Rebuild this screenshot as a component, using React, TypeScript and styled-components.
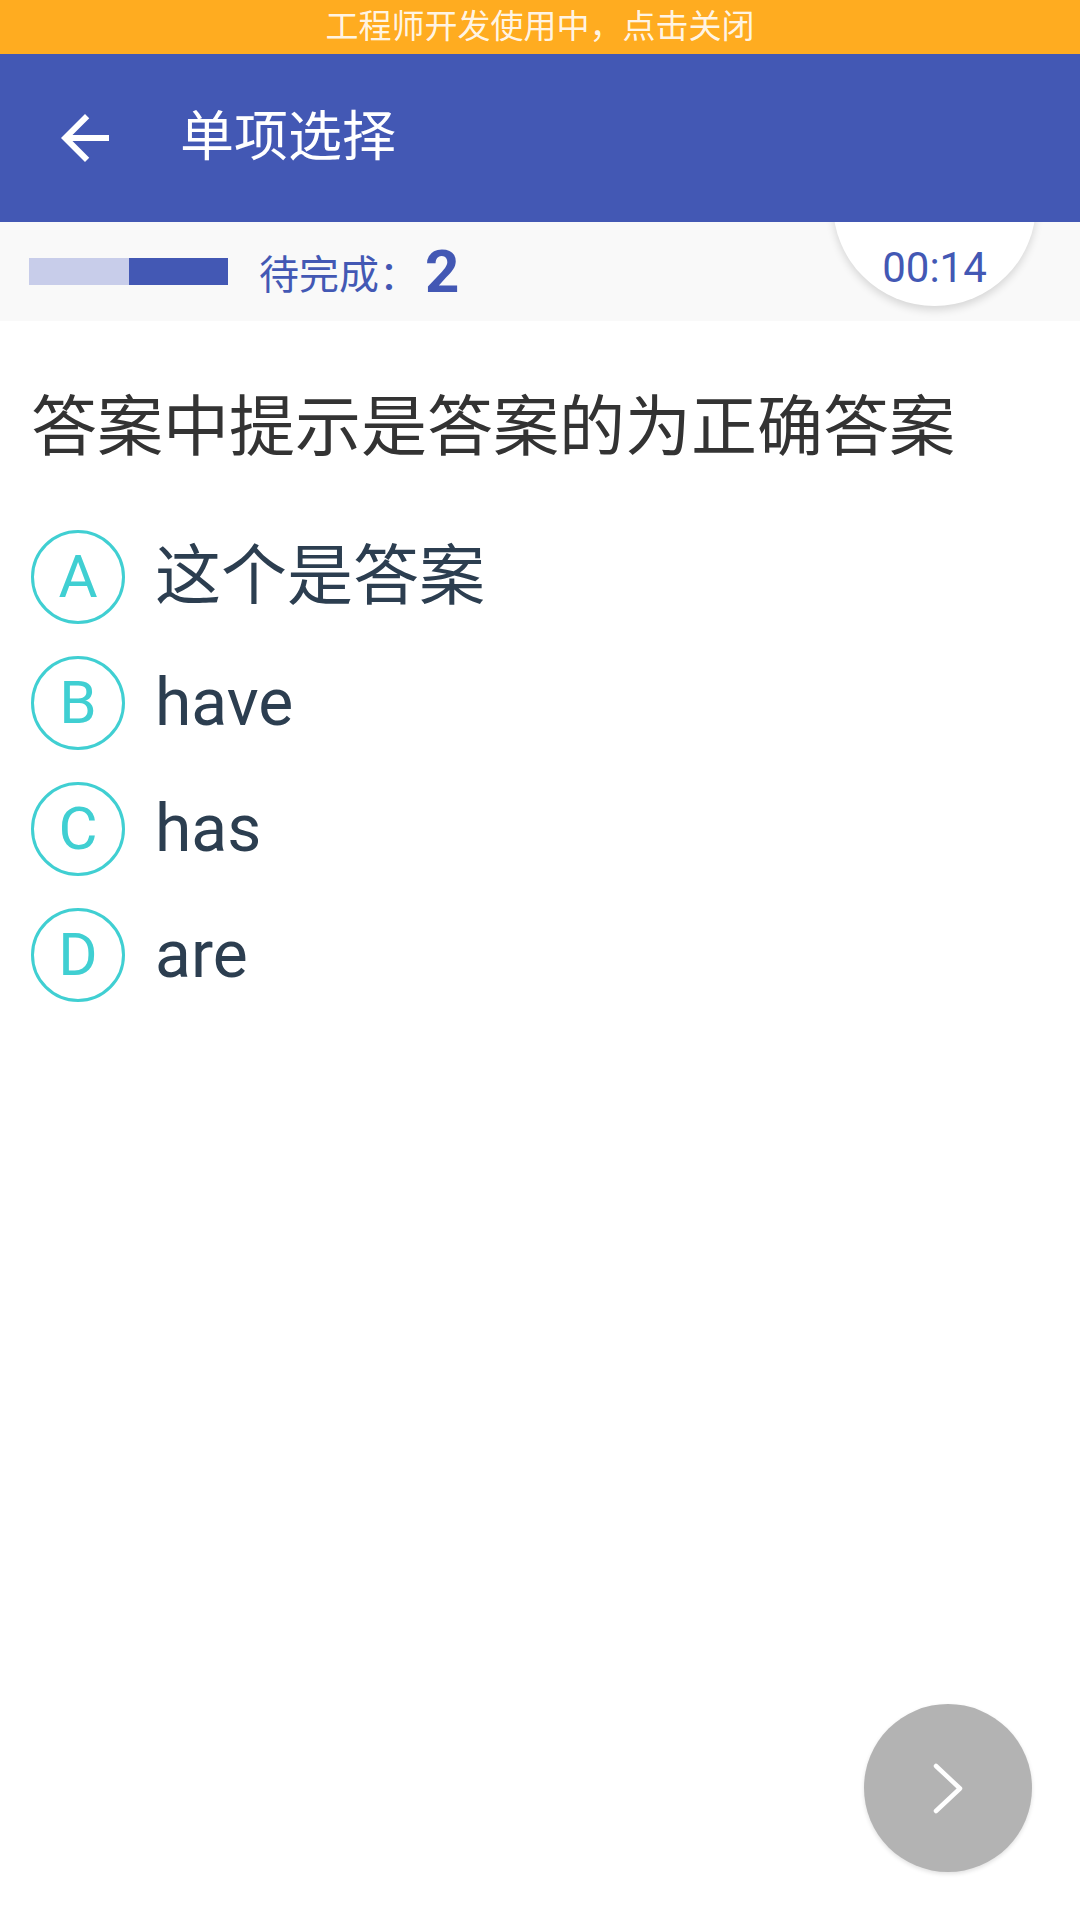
import React from "react";
import styled, { createGlobalStyle } from "styled-components";

const GlobalStyle = createGlobalStyle`
  html, body {
    margin: 0;
    padding: 0;
    background: #ffffff;
  }
  body {
    font-family: Roboto, "Noto Sans CJK SC", "Noto Sans", sans-serif;
    -webkit-font-smoothing: antialiased;
  }
  * { box-sizing: border-box; }
`;

const Page = styled.div`
  position: relative;
  width: 1080px;
  min-height: 1920px;
  background: #ffffff;
  overflow: hidden;
`;

const DevBanner = styled.div`
  height: 54px;
  background: #ffac20;
  color: rgba(255, 255, 255, 0.9);
  font-size: 33px;
  line-height: 54px;
  text-align: center;
`;

const Toolbar = styled.header`
  position: relative;
  z-index: 2;
  height: 168px;
  background: #4358b4;
  display: flex;
  align-items: center;
  padding-left: 49px;
`;

const BackButton = styled.button`
  width: 72px;
  height: 72px;
  padding: 0;
  border: none;
  background: transparent;
  display: flex;
  align-items: center;
  justify-content: center;
  svg { display: block; }
`;

const Title = styled.h1`
  margin: 0 0 0 59px;
  font-size: 54px;
  font-weight: 400;
  color: #ffffff;
  line-height: 1;
`;

const StatusBar = styled.div`
  position: relative;
  z-index: 1;
  height: 99px;
  background: #f9f9f9;
  display: flex;
  align-items: center;
  padding-left: 29px;
`;

const Progress = styled.div`
  width: 199px;
  height: 27px;
  background: #4358b4;
  display: flex;
`;

const ProgressDone = styled.div`
  height: 100%;
  background: #c8cdea;
`;

const PendingLabel = styled.span`
  margin-left: 31px;
  font-size: 40px;
  color: #4358b4;
  font-family: Roboto, "Noto Sans CJK SC", sans-serif;
`;

const PendingCount = styled.span`
  margin-left: 6px;
  font-size: 60px;
  font-weight: 700;
  color: #4358b4;
  line-height: 1;
`;

const TimerBubble = styled.div`
  position: absolute;
  right: 44px;
  top: -120px;
  width: 203px;
  height: 204px;
  border-radius: 50%;
  background: #ffffff;
  box-shadow: 0 4px 8px rgba(0, 0, 0, 0.14);
  display: flex;
  flex-direction: column;
  justify-content: flex-end;
  align-items: center;
  padding-bottom: 17px;
`;

const TimerText = styled.span`
  font-size: 42px;
  line-height: 42px;
  color: #4358b4;
`;

const Content = styled.main`
  padding: 61px 31px 0;
`;

const Question = styled.div`
  font-size: 66px;
  line-height: 92px;
  color: #333333;
`;

const OptionList = styled.ul`
  list-style: none;
  margin: 56px 0 0;
  padding: 0;
  display: flex;
  flex-direction: column;
  gap: 32px;
`;

const OptionRow = styled.li`
  display: flex;
  align-items: center;
  height: 94px;
`;

const OptionBadge = styled.span`
  width: 94px;
  height: 94px;
  flex: none;
  border-radius: 50%;
  border: 3px solid #40cfd2;
  color: #40cfd2;
  font-size: 60px;
  line-height: 1;
  display: flex;
  align-items: center;
  justify-content: center;
`;

const OptionText = styled.span`
  margin-left: 30px;
  font-size: 66px;
  color: #2c3e50;
  line-height: 1;
`;

const NextFab = styled.button`
  position: absolute;
  right: 48px;
  bottom: 48px;
  width: 168px;
  height: 168px;
  border-radius: 50%;
  border: none;
  background: #b3b3b3;
  box-shadow: 0 2px 4px rgba(0, 0, 0, 0.12);
  display: flex;
  align-items: center;
  justify-content: center;
  padding: 0;
  svg { display: block; }
`;

const options = [
  { key: "A", text: "这个是答案" },
  { key: "B", text: "have" },
  { key: "C", text: "has" },
  { key: "D", text: "are" },
];

export default function App() {
  const done = 1;
  const total = 2;
  return (
    <Page>
      <GlobalStyle />
      <DevBanner>工程师开发使用中，点击关闭</DevBanner>
      <Toolbar>
        <BackButton aria-label="back">
          <svg width="72" height="72" viewBox="0 0 24 24">
            <path
              fill="#ffffff"
              d="M20 11H7.83l5.59-5.59L12 4l-8 8 8 8 1.41-1.41L7.83 13H20v-2z"
            />
          </svg>
        </BackButton>
        <Title>单项选择</Title>
      </Toolbar>
      <StatusBar>
        <Progress>
          <ProgressDone style={{ width: `${(done / total) * 100}%` }} />
        </Progress>
        <PendingLabel>待完成：</PendingLabel>
        <PendingCount>2</PendingCount>
        <TimerBubble>
          <TimerText>00:14</TimerText>
        </TimerBubble>
      </StatusBar>
      <Content>
        <Question>答案中提示是答案的为正确答案</Question>
        <OptionList>
          {options.map((o) => (
            <OptionRow key={o.key}>
              <OptionBadge>{o.key}</OptionBadge>
              <OptionText>{o.text}</OptionText>
            </OptionRow>
          ))}
        </OptionList>
      </Content>
      <NextFab aria-label="next">
        <svg width="36" height="54" viewBox="0 0 36 54">
          <polyline
            points="6,5 30,27.5 6,50"
            fill="none"
            stroke="#ffffff"
            strokeWidth="4.5"
            strokeLinecap="round"
            strokeLinejoin="round"
          />
        </svg>
      </NextFab>
    </Page>
  );
}
